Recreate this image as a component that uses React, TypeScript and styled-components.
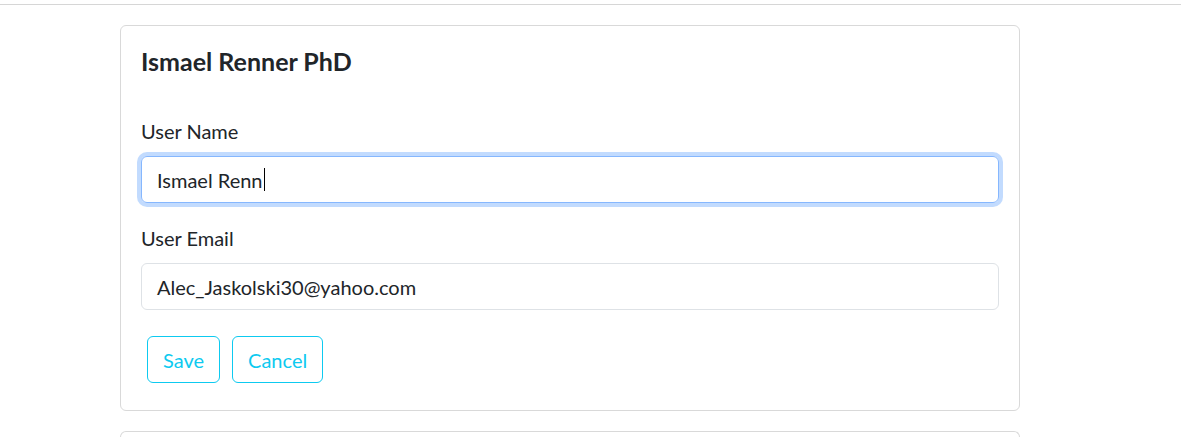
import styled, { createGlobalStyle } from "styled-components";

const GlobalStyle = createGlobalStyle`
  body {
    margin: 0;
    background: #fff;
    font-family: Lato, "Noto Sans", sans-serif;
    color: #212529;
  }
`;

const TopBar = styled.div`
  height: 4px;
  border-bottom: 1px solid #d6d6d6;
`;

const Container = styled.main`
  width: 900px;
  margin-left: 120px;
`;

const Card = styled.section`
  margin-top: 20px;
  border: 1px solid #d9d9d9;
  border-radius: 6px;
  padding: 20px 20px 21px;
  display: flex;
  flex-direction: column;
`;

const Title = styled.h5`
  margin: 0 0 40px;
  font-size: 25px;
  font-weight: 700;
  line-height: 30px;
`;

const Group = styled.div`
  display: flex;
  flex-direction: column;
  gap: 10px;
  margin-bottom: 20px;
`;

const Label = styled.label`
  font-size: 20px;
  line-height: 30px;
`;

const Field = styled.div<{ $focused?: boolean }>`
  height: 45px;
  display: flex;
  align-items: center;
  padding: 0 15px;
  border: 1px solid ${(p) => (p.$focused ? "#86b7fe" : "#dee2e6")};
  border-radius: 6px;
  font-size: 20px;
  box-shadow: ${(p) => (p.$focused ? "0 0 0 4px rgba(13, 110, 253, 0.25)" : "none")};
`;

const Caret = styled.span`
  display: inline-block;
  width: 1px;
  height: 23px;
  background: #000;
  margin-left: 1px;
`;

const Actions = styled.div`
  display: flex;
  gap: 12px;
  padding: 6px;
`;

const Button = styled.button`
  height: 47px;
  padding: 0 15px;
  background: #fff;
  border: 1px solid #0dcaf0;
  border-radius: 6px;
  color: #0dcaf0;
  font-family: inherit;
  font-size: 20px;
  cursor: pointer;
`;

const NextCard = styled.div`
  margin-top: 20px;
  height: 20px;
  border: 1px solid #d9d9d9;
  border-bottom: none;
  border-radius: 6px 6px 0 0;
`;

export default function App() {
  return (
    <>
      <GlobalStyle />
      <TopBar />
      <Container>
        <Card>
          <Title>Ismael Renner PhD</Title>
          <Group>
            <Label>User Name</Label>
            <Field $focused>
              Ismael Renn
              <Caret />
            </Field>
          </Group>
          <Group>
            <Label>User Email</Label>
            <Field>Alec_Jaskolski30@yahoo.com</Field>
          </Group>
          <Actions>
            <Button>Save</Button>
            <Button>Cancel</Button>
          </Actions>
        </Card>
        <NextCard />
      </Container>
    </>
  );
}
